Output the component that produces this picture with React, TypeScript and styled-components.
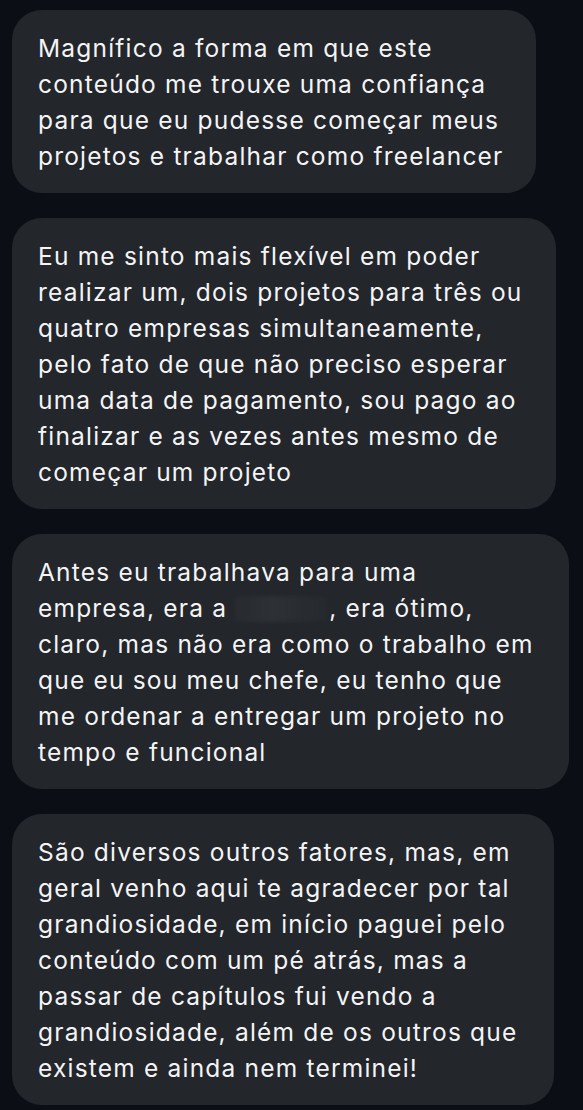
import React from 'react'
import styled, { createGlobalStyle } from 'styled-components'

const GlobalStyle = createGlobalStyle`
  html, body {
    margin: 0;
    padding: 0;
    background: #0b0e14;
  }

  body {
    font-family: 'Inter', 'Noto Sans', sans-serif;
    -webkit-font-smoothing: antialiased;
  }
`

const Thread = styled.main`
  box-sizing: border-box;
  min-height: 1110px;
  padding: 10px 12px;
  display: flex;
  flex-direction: column;
  align-items: flex-start;
  gap: 25px;
  background: #0b0e14;
`

const Bubble = styled.div<{ $width: number }>`
  box-sizing: border-box;
  width: ${(props) => props.$width}px;
  padding: 20px 0 19px 26px;
  border-radius: 30px;
  background: #23262b;
  color: #f4f4f5;
  font-size: 24.5px;
  line-height: 36px;
  letter-spacing: 1.2px;
`

const Line = styled.span`
  display: block;
  white-space: nowrap;
`

// nome da empresa borrado no print original
const Redacted = styled.span`
  display: inline-block;
  width: 94px;
  height: 26px;
  margin: 0 1px 0 7px;
  vertical-align: -5px;
  border-radius: 4px;
  background: linear-gradient(
    90deg,
    rgba(255, 255, 255, 0.02),
    rgba(255, 255, 255, 0.05) 40%,
    rgba(255, 255, 255, 0.03) 70%,
    rgba(255, 255, 255, 0.01)
  );
  filter: blur(2px);
`

const messages: { width: number; lines: React.ReactNode[] }[] = [
  {
    width: 524,
    lines: [
      'Magnífico a forma em que este',
      'conteúdo me trouxe uma confiança',
      'para que eu pudesse começar meus',
      'projetos e trabalhar como freelancer',
    ],
  },
  {
    width: 544,
    lines: [
      'Eu me sinto mais flexível em poder',
      'realizar um, dois projetos para três ou',
      'quatro empresas simultaneamente,',
      'pelo fato de que não preciso esperar',
      'uma data de pagamento, sou pago ao',
      'finalizar e as vezes antes mesmo de',
      'começar um projeto',
    ],
  },
  {
    width: 557,
    lines: [
      'Antes eu trabalhava para uma',
      <>
        empresa, era a<Redacted />, era ótimo,
      </>,
      'claro, mas não era como o trabalho em',
      'que eu sou meu chefe, eu tenho que',
      'me ordenar a entregar um projeto no',
      'tempo e funcional',
    ],
  },
  {
    width: 542,
    lines: [
      'São diversos outros fatores, mas, em',
      'geral venho aqui te agradecer por tal',
      'grandiosidade, em início paguei pelo',
      'conteúdo com um pé atrás, mas a',
      'passar de capítulos fui vendo a',
      'grandiosidade, além de os outros que',
      'existem e ainda nem terminei!',
    ],
  },
]

export default function App() {
  return (
    <>
      <GlobalStyle />
      <Thread>
        {messages.map((msg, i) => (
          <Bubble $width={msg.width} key={i}>
            {msg.lines.map((line, j) => (
              <Line key={j}>{line}</Line>
            ))}
          </Bubble>
        ))}
      </Thread>
    </>
  )
}
